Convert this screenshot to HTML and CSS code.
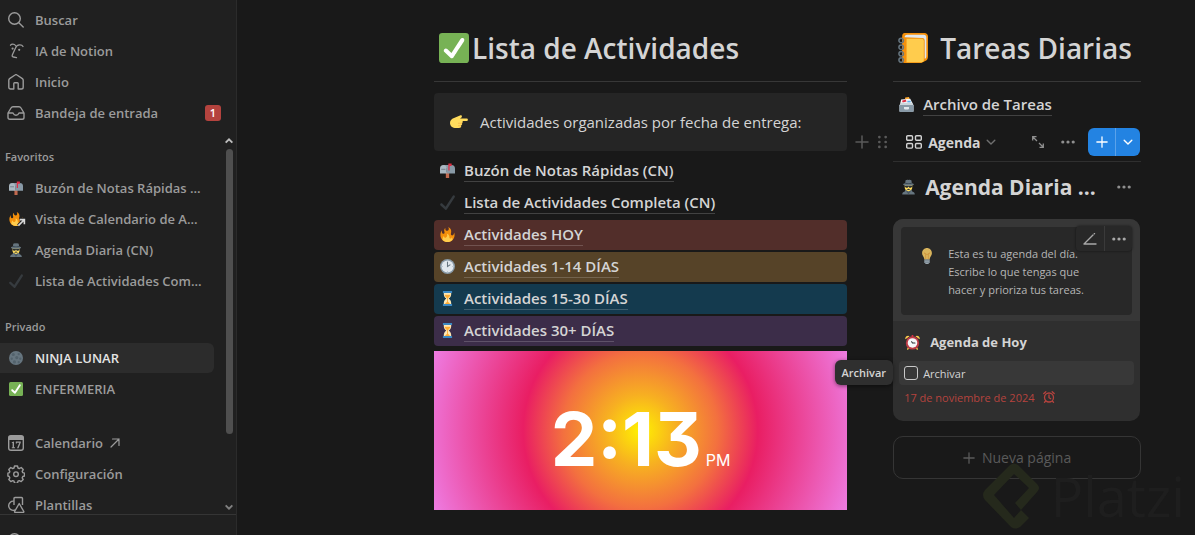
FILE: index.html
```html
<!DOCTYPE html>
<html lang="es">
<head>
<meta charset="utf-8">
<meta name="viewport" content="width=device-width, initial-scale=1">
<title>NINJA LUNAR</title>
<link rel="stylesheet" href="styles.css">
</head>
<body>
<svg class="sprite" aria-hidden="true">
  <symbol id="e-check" viewBox="0 0 36 36"><rect width="36" height="36" rx="4" fill="#77b255"/><path fill="#fff" d="M29.28 6.362c-1.156-.751-2.704-.422-3.458.736L14.936 23.877l-5.029-4.65c-1.014-.938-2.596-.875-3.533.138-.937 1.014-.875 2.596.139 3.533l7.209 6.666c.48.445 1.09.665 1.696.665.673 0 1.534-.282 2.099-1.139.332-.506 12.5-19.27 12.5-19.27.751-1.159.421-2.707-.737-3.458z"/></symbol>
  <symbol id="e-tick" viewBox="0 0 36 36"><path fill="#363b3f" d="M34.459 1.375c-1.391-.902-3.248-.506-4.149.884L13.5 28.17l-8.198-7.58c-1.217-1.125-3.114-1.051-4.239.166-1.125 1.216-1.051 3.114.166 4.239l10.764 9.952s.309.266.452.359c.504.328 1.07.484 1.63.484.982 0 1.945-.482 2.52-1.368L35.343 5.524c.902-1.39.506-3.248-.884-4.149z"/></symbol>
  <symbol id="e-mailbox" viewBox="0 0 36 36"><path fill="#c1694f" d="M14 22h8v14h-8z"/><path fill="#8899a6" d="M8 5h20c5 0 8 3 8 8v12H16V13z"/><path fill="#aab8c2" d="M8 5c5 0 8 3.500 8 8v12H0V13c0-5 3-8 8-8z"/><path fill="#66757f" d="M3 14h10v2H3z"/><path fill="#dd2e44" d="M20 1h8v6h-5v11h-3z"/></symbol>
  <symbol id="e-fire" viewBox="0 0 36 36"><path fill="#f4900c" d="M35 19c0-2.062-.367-4.039-1.040-5.868-.46 5.389-3.333 8.157-6.335 6.868-2.812-1.208-.917-5.917-.777-8.164.236-3.809-.012-8.169-6.931-11.794 2.875 5.500.333 8.917-2.333 9.125-2.958.231-5.667-2.542-4.667-7.042-3.238 2.386-3.332 6.402-2.333 9 1.042 2.708-.042 4.958-2.583 5.208-2.840.280-4.418-3.041-2.963-8.333C2.520 10.965 1 14.805 1 19c0 9.389 7.611 17 17 17s17-7.611 17-17z"/><path fill="#ffcc4d" d="M28.394 23.999c.148 3.084-2.561 4.293-4.019 3.709-2.106-.843-1.541-2.291-2.083-5.291s-2.625-5.083-5.708-6c2.250 6.333-1.247 8.667-3.080 9.084-1.872.426-3.753-.001-3.968-4.007C7.352 23.668 6 26.676 6 30c0 .368.023.730.055 1.090C9.125 34.124 13.342 36 18 36s8.875-1.876 11.945-4.910c.032-.36.055-.722.055-1.090 0-2.187-.584-4.236-1.606-6.001z"/></symbol>
  <symbol id="e-spy" viewBox="0 0 36 36"><path fill="#66757f" d="M3 36c0-4 2-6 6-7l2-5h14l2 5c4 1 6 3 6 7z"/><path fill="#ffdc5d" d="M9 13h18v7c0 4-4 8-9 8s-9-4-9-8z"/><path fill="#292f33" d="M9 15h18v2l-3 3h-4l-2-3-2 3h-4l-3-3zM13 24l5-2 5 2-5 1z"/><path fill="#66757f" d="M11 2c2-2 5-2 7-1 2-1 5-1 7 1l1 7c3 1 5 2 5 3 0 2-6 3-13 3S5 14 5 12c0-1 2-2 5-3z"/><path fill="#3b4a54" d="M10 8c5 1 11 1 16 0v2c-5 1-11 1-16 0z"/><path fill="#4a5963" d="M12 27l6 9 6-9-2 0-4 3-4-3z"/></symbol>
  <symbol id="e-moon" viewBox="0 0 36 36"><circle cx="18" cy="18" r="18" fill="#66757f"/><g fill="#53626c"><circle cx="11" cy="9" r="4"/><circle cx="25" cy="8" r="3"/><circle cx="20" cy="17" r="4"/><circle cx="7" cy="20" r="3"/><circle cx="29" cy="20" r="3"/><circle cx="14" cy="28" r="4"/><circle cx="25" cy="29" r="3"/></g></symbol>
  <symbol id="e-point" viewBox="0 0 36 36"><path fill="#ffdc5d" d="M33.500 11H20l3-2c2-3 0-5-3-4L8 10c-5 2-8 5-8 10 0 6 5 10 12 10h6c4 0 5-3 4-5 2-1 3-3 2-5 2-1 2-2 1-4h8.500c3 0 3-5 0-5z"/><path fill="none" stroke="#ef9645" stroke-width="1" d="M24 20.500h-8M22 25.500h-6"/></symbol>
  <symbol id="e-clock" viewBox="0 0 36 36"><circle cx="18" cy="18" r="18" fill="#8899a6"/><circle cx="18" cy="18" r="14.500" fill="#e1e8ed"/><path fill="none" stroke="#66757f" stroke-width="2.500" stroke-linecap="round" d="M18 7v11l6-4"/><path stroke="#99aab5" stroke-width="1.500" d="M18 29v2M5 18h2M29 18h2"/></symbol>
  <symbol id="e-hourglass" viewBox="0 0 36 36"><path fill="#ffe8b6" d="M9 4h18c0 7-1 10-6 14 5 4 6 7 6 14H9c0-7 1-10 6-14C10 14 9 11 9 4z"/><path fill="#ffac33" d="M11 9h14c-1 4-3 6-6 8v9l6 6H11l6-6v-9c-3-2-5-4-6-8z"/><path fill="#3b88c3" d="M7 0h22v5H7zM7 31h22v5H7z"/></symbol>
  <symbol id="e-notebook" viewBox="0 0 36 36"><path fill="#f4900c" d="M8 0h24c2 0 4 2 4 4v24c0 3-1 5-4 6l-4 2H8c-2 0-3-1-3-3V4c0-2 1-4 3-4z"/><path fill="#e1e8ed" d="M8 5c0-2 1-3 3-3h20c2 0 3 1 3 3v23c0 2-1 3-2 3V9c0-2-1-3-3-3z"/><path fill="#ffcc4d" d="M10 7h18c2 0 3 1 3 3v22c0 2-1 3-3 3H10z"/><path fill="#f4900c" d="M5 5l5 2v28H8c-2 0-3-1-3-3z"/><g fill="none" stroke="#66757f" stroke-width="1.800"><circle cx="3.800" cy="9" r="2.700"/><circle cx="3.800" cy="17" r="2.700"/><circle cx="3.800" cy="25" r="2.700"/><circle cx="3.800" cy="32.500" r="2.700"/></g></symbol>
  <symbol id="e-box" viewBox="0 0 36 36"><path fill="#ffac33" d="M15 1l9-1 3 10H13z"/><path fill="#f5f8fa" d="M5 6l22-2 6 12H3z"/><path fill="#dd2e44" d="M7 9l9-3 2 5-9 2z"/><path fill="#5dadec" d="M20 9h8v4h-8z"/><path fill="#ccd6dd" d="M4 14h28l3 6v13c0 2-1 3-3 3H4c-2 0-3-1-3-3V20z"/><path fill="#8899a6" d="M1 19h34v14c0 2-1 3-3 3H4c-2 0-3-1-3-3z"/><path fill="#e1e8ed" d="M12 24h12v4c-2 3-10 3-12 0z"/></symbol>
  <symbol id="e-bulb" viewBox="0 0 36 36"><path fill="#d9b45c" d="M29 11c0 7-5 9-5 15H12c0-6-5-8-5-15C7 5 12 0 18 0s11 5 11 11z"/><path fill="none" stroke="#c98a35" stroke-width="1.500" d="M15 25V15l-3-4 3 2 3 2 3-2 3-2-3 4v10"/><path fill="#9aa7b0" d="M12 26h12v6l-3 4h-6l-3-4z"/><path fill="#66757f" d="M12 28h12v1.500H12zM12 31h12v1.500H12z"/></symbol>
  <symbol id="e-alarm" viewBox="0 0 36 36"><path fill="#ffcc4d" d="M1 10c-2-5 5-11 10-7zM35 10c2-5-5-11-10-7zM6 30l4 2-3 4-2-1zM30 30l-4 2 3 4 2-1z"/><path fill="#dd2e44" d="M16 0h4v5h-4z"/><circle cx="18" cy="19" r="16" fill="#be3c47"/><circle cx="18" cy="19" r="11.500" fill="#f5f8fa"/><path fill="none" stroke="#292f33" stroke-width="2.500" stroke-linecap="round" d="M18 19h6M18 19l-2-3"/></symbol>

  <symbol id="i-search" viewBox="0 0 16 16"><g fill="none" stroke="currentColor" stroke-width="1.400" stroke-linecap="round"><circle cx="6.500" cy="6.500" r="5.800"/><path d="M10.800 10.800l4.400 4.200"/></g></symbol>
  <symbol id="i-ai" viewBox="0 0 16 16"><g fill="none" stroke="currentColor" stroke-width="1.300" stroke-linecap="round" stroke-linejoin="round"><path d="M2.500 2.200C3.500.8 6.200.6 7.500 2.500M15 3.500C14 1.500 9 .8 7.500 5L4.500 11.500c-.6 1.500-.5 2.500 1 2.500l3 .6"/></g><circle cx="4.600" cy="5.600" r="1.100" fill="currentColor"/><circle cx="11.200" cy="6.800" r="1.100" fill="currentColor"/></symbol>
  <symbol id="i-home" viewBox="0 0 16 16"><path fill="none" stroke="currentColor" stroke-width="1.400" stroke-linejoin="round" d="M.8 6.200Q.8 5.200 1.600 4.600L7 1q1-.7 2 0l5.400 3.600q.8.600.8 1.600v7q0 1.800-1.800 1.800H10.200V9.600q0-.8-.8-.8H6.600q-.8 0-.8.800V15H2.600Q.8 15 .8 13.200z"/></symbol>
  <symbol id="i-inbox" viewBox="0 0 18 16"><path fill="none" stroke="currentColor" stroke-width="1.400" stroke-linejoin="round" d="M1 8l3-5q.7-1.200 2-1.200h6q1.300 0 2 1.200l3 5v4.400q0 1.800-1.800 1.800H2.800Q1 14.200 1 12.400zM1 8h4.500q.7 0 .9.600.5 1.600 2.600 1.600t2.600-1.600q.2-.6.900-.6H17"/></symbol>
  <symbol id="i-cal" viewBox="0 0 16 16"><path fill="none" stroke="currentColor" stroke-width="1.400" d="M.7 3.500V13q0 2.300 2.300 2.300h10q2.300 0 2.300-2.300V3.500z"/><path fill="currentColor" d="M0 5V2.800Q0 0 2.800 0h10.400Q16 0 16 2.800V5zM3.800 7.200L6 6.400v5.800h1v1H3.800v-1h.8V7.900h-.8zM7.800 6.400h5v1.200l-2.300 5.600H9l2.300-5.400H8.900v.8H7.800z"/></symbol>
  <symbol id="i-gear" viewBox="0 0 18 18"><g fill="none" stroke="currentColor" stroke-width="1.400" stroke-linejoin="round"><path d="M7.500 1h3l.5 2 1.300.6 1.900-1.100 2 2.100-1 1.800.6 1.300 1.700.5v2.800l-1.700.5-.6 1.300 1 1.800-2 2-1.900-1-1.300.6-.5 2h-3L7 16.200l-1.300-.6-1.900 1-2-2 1-1.800-.6-1.300L.9 11V8.200l1.500-.5.400-1.300-1-1.800 2-2.100 1.900 1.100L7 3z"/><circle cx="9" cy="9.200" r="2.300"/></g></symbol>
  <symbol id="i-shapes" viewBox="0 0 18 18"><g fill="none" stroke="currentColor" stroke-width="1.400" stroke-linejoin="round"><path d="M7 5.200A4.600 4.600 0 1 0 8 14M7 9V2.500Q7 1.500 8 1.500h6.500q1 0 1 1V9M12.200 7.500l4.600 8q.2.900-.6.900H8.200q-.8 0-.6-.9z"/></g></symbol>
  <symbol id="i-chev" viewBox="0 0 10 10"><path fill="none" stroke="currentColor" stroke-width="1.400" stroke-linecap="round" stroke-linejoin="round" d="M1.200 3.200L5 7l3.800-3.800"/></symbol>
  <symbol id="i-arrow" viewBox="0 0 10 10"><path fill="none" stroke="currentColor" stroke-width="2.400" d="M.8 3L5 7.200 9.200 3"/></symbol>
  <symbol id="i-plus" viewBox="0 0 14 14"><path fill="none" stroke="currentColor" stroke-width="1.500" stroke-linecap="round" d="M7 1v12M1 7h12"/></symbol>
  <symbol id="i-dots" viewBox="0 0 14 14"><g fill="currentColor"><circle cx="1.800" cy="7" r="1.600"/><circle cx="7" cy="7" r="1.600"/><circle cx="12.200" cy="7" r="1.600"/></g></symbol>
  <symbol id="i-ne" viewBox="0 0 10 10"><path fill="none" stroke="currentColor" stroke-width="1.200" stroke-linecap="round" d="M1 9l8-8M2.500 1H9v6.500"/></symbol>
</svg>

<div class="app">
  <aside class="sidebar">
    <nav class="nav-top" aria-label="Principal">
      <a class="item" href="#"><svg class="ico"><use href="#i-search"/></svg><span class="label">Buscar</span></a>
      <a class="item" href="#"><svg class="ico"><use href="#i-ai"/></svg><span class="label">IA de Notion</span></a>
      <a class="item" href="#"><svg class="ico"><use href="#i-home"/></svg><span class="label">Inicio</span></a>
      <a class="item" href="#"><svg class="ico wide"><use href="#i-inbox"/></svg><span class="label">Bandeja de entrada</span><span class="badge">1</span></a>
    </nav>
    <div class="scroll">
      <div class="lists">
        <h2 class="group">Favoritos</h2>
        <nav class="section" aria-label="Favoritos">
          <a class="item" href="#"><svg class="ico emo"><use href="#e-mailbox"/></svg><span class="label">Buzón de Notas Rápidas ...</span></a>
          <a class="item" href="#"><span class="fire"><svg class="ico emo"><use href="#e-fire"/></svg><svg class="link-arrow" viewBox="0 0 10 10"><path d="M1.500 8.500l6-6M3 1.800h5.200V7" fill="none" stroke="#202020" stroke-width="4"/><path d="M1.500 8.500l6-6M3 1.800h5.200V7" fill="none" stroke="#d8d8d8" stroke-width="1.800"/></svg></span><span class="label">Vista de Calendario de A...</span></a>
          <a class="item" href="#"><svg class="ico emo"><use href="#e-spy"/></svg><span class="label">Agenda Diaria (CN)</span></a>
          <a class="item" href="#"><svg class="ico emo"><use href="#e-tick"/></svg><span class="label">Lista de Actividades Com...</span></a>
        </nav>
        <h2 class="group">Privado</h2>
        <nav class="section" aria-label="Privado">
          <a class="item active" href="#" aria-current="page"><svg class="ico emo"><use href="#e-moon"/></svg><span class="label">NINJA LUNAR</span></a>
          <a class="item" href="#"><svg class="ico emo"><use href="#e-check"/></svg><span class="label">ENFERMERIA</span></a>
        </nav>
        <nav class="section tools" aria-label="Herramientas">
          <a class="item" href="#"><svg class="ico"><use href="#i-cal"/></svg><span class="label">Calendario</span><svg class="ext"><use href="#i-ne"/></svg></a>
          <a class="item" href="#"><svg class="ico wide"><use href="#i-gear"/></svg><span class="label">Configuración</span></a>
          <a class="item" href="#"><svg class="ico wide"><use href="#i-shapes"/></svg><span class="label">Plantillas</span></a>
        </nav>
      </div>
      <div class="bar" aria-hidden="true">
        <svg class="bar-up"><use href="#i-arrow"/></svg>
        <div class="thumb"></div>
        <svg class="bar-down"><use href="#i-arrow"/></svg>
      </div>
    </div>
    <div class="foot"><svg class="ico"><use href="#i-search"/></svg></div>
  </aside>

  <main class="page">
    <section class="col-main">
      <h1 class="title"><svg class="big"><use href="#e-check"/></svg><span>Lista de Actividades</span></h1>
      <div class="callout"><svg class="hand"><use href="#e-point"/></svg><p>Actividades organizadas por fecha de entrega:</p></div>
      <div class="rows">
        <div class="row"><svg class="emo"><use href="#e-mailbox"/></svg><a href="#">Buzón de Notas Rápidas (CN)</a></div>
        <div class="row"><svg class="emo"><use href="#e-tick"/></svg><a href="#">Lista de Actividades Completa (CN)</a></div>
        <div class="row red"><svg class="emo"><use href="#e-fire"/></svg><a href="#">Actividades HOY</a></div>
        <div class="row brown"><svg class="emo"><use href="#e-clock"/></svg><a href="#">Actividades 1-14 DÍAS</a></div>
        <div class="row blue"><svg class="emo"><use href="#e-hourglass"/></svg><a href="#">Actividades 15-30 DÍAS</a></div>
        <div class="row purple"><svg class="emo"><use href="#e-hourglass"/></svg><a href="#">Actividades 30+ DÍAS</a></div>
      </div>
      <div class="clock"><span class="time">2:13</span><span class="ampm">PM</span></div>
    </section>

    <section class="col-side">
      <h1 class="title side-title"><svg class="big"><use href="#e-notebook"/></svg><span>Tareas Diarias</span></h1>
      <div class="archive"><svg class="emo"><use href="#e-box"/></svg><a href="#">Archivo de Tareas</a></div>
      <div class="toolbar">
        <div class="handles">
          <button type="button" aria-label="Añadir bloque"><svg class="h-plus"><use href="#i-plus"/></svg></button>
          <button type="button" aria-label="Mover bloque"><svg class="h-grip" viewBox="0 0 10 14"><g fill="currentColor"><circle cx="1.500" cy="1.500" r="1.500"/><circle cx="8.500" cy="1.500" r="1.500"/><circle cx="1.500" cy="7" r="1.500"/><circle cx="8.500" cy="7" r="1.500"/><circle cx="1.500" cy="12.500" r="1.500"/><circle cx="8.500" cy="12.500" r="1.500"/></g></svg></button>
        </div>
        <button type="button" class="view"><svg class="grid-ico" viewBox="0 0 16 14"><g fill="none" stroke="currentColor" stroke-width="1.400"><rect x=".7" y=".7" width="5.800" height="4.600" rx="1"/><rect x="9.500" y=".7" width="5.800" height="4.600" rx="1"/><rect x=".7" y="8.500" width="5.800" height="4.600" rx="1"/><rect x="9.500" y="8.500" width="5.800" height="4.600" rx="1"/></g></svg><span>Agenda</span><svg class="chev"><use href="#i-chev"/></svg></button>
        <button type="button" class="tool" aria-label="Abrir como página"><svg class="expand" viewBox="0 0 12 12"><path fill="none" stroke="currentColor" stroke-width="1.300" d="M.7 4.500V.7h3.800M.7.7l4.300 4.300M11.300 7.500v3.800H7.500M11.300 11.300L7 7"/></svg></button>
        <button type="button" class="tool" aria-label="Más opciones"><svg class="dots"><use href="#i-dots"/></svg></button>
        <div class="new">
          <button type="button" class="new-add" aria-label="Nuevo"><svg><use href="#i-plus"/></svg></button>
          <button type="button" class="new-more" aria-label="Más plantillas"><svg><use href="#i-chev"/></svg></button>
        </div>
      </div>
      <div class="db-title"><svg class="emo"><use href="#e-spy"/></svg><h2>Agenda Diaria ...</h2><button type="button" class="tool" aria-label="Opciones de la base"><svg class="dots"><use href="#i-dots"/></svg></button></div>

      <article class="card">
        <div class="preview">
          <div class="note"><svg class="bulb"><use href="#e-bulb"/></svg><p>Esta es tu agenda del día.<br>Escribe lo que tengas que<br>hacer y prioriza tus tareas.</p></div>
          <div class="actions">
            <button type="button" aria-label="Editar"><svg class="pen" viewBox="0 0 14 12"><path fill="none" stroke="currentColor" stroke-width="1.400" stroke-linecap="round" d="M1 11L10 2M11.300.8l.2-.2M1 11h12"/></svg></button>
            <button type="button" aria-label="Más"><svg class="dots"><use href="#i-dots"/></svg></button>
          </div>
        </div>
        <div class="details">
          <h3><svg class="emo"><use href="#e-alarm"/></svg><span>Agenda de Hoy</span></h3>
          <label class="prop"><input type="checkbox"><span>Archivar</span></label>
          <p class="date"><span>17 de noviembre de 2024</span><svg class="bell" viewBox="0 0 12 12"><g fill="none" stroke="currentColor" stroke-width="1.300" stroke-linecap="round"><circle cx="6" cy="6.500" r="4.500"/><path d="M6 4v2.700l1.700 1M.8 2.600L2.800.8M11.200 2.600L9.200.8M2.500 10.300l-1 1M9.500 10.300l1 1"/></g></svg></p>
          <div class="tip" role="tooltip">Archivar</div>
        </div>
      </article>
      <button type="button" class="add-page"><svg><use href="#i-plus"/></svg><span>Nueva página</span></button>
    </section>
  </main>

  <div class="mark" aria-hidden="true">
    <svg viewBox="0 0 56 66"><path fill="#25291c" fill-rule="evenodd" d="M2 27L27 2q4-3 8 0l19 19q4 4 0 8L38 47l8 8-9 9q-5 3-9 0L2 37q-4-5 0-10zM11 32l20 23 7-8-6-7 14-15L31 11z"/></svg>
    <span>Platzi</span>
  </div>
</div>
</body>
</html>
```
FILE: styles.css
```css
* { box-sizing: border-box; }
body { margin: 0; background: #191919; color: #d4d4d4; font-family: "Open Sans", "Noto Sans", sans-serif; }
h1, h2, h3, p { margin: 0; }
a { color: inherit; text-decoration: none; }
button { margin: 0; padding: 0; border: 0; background: none; color: inherit; font: inherit; display: flex; align-items: center; justify-content: center; }
svg { display: block; flex: none; }
.sprite { position: absolute; width: 0; height: 0; }
.app { position: relative; display: flex; height: 100vh; overflow: hidden; }
.emo { width: 14px; height: 14px; }

.sidebar { display: flex; flex-direction: column; flex: none; width: 237px; background: #202020; border-right: 1px solid #2b2b2b; color: #9b9b9b; }
.nav-top { display: flex; flex-direction: column; gap: 1px; padding: 5px 13px 0 0; }
.section { display: flex; flex-direction: column; gap: 1px; }
.item { display: flex; align-items: center; height: 30px; padding: 0 2px 0 8px; font-size: 13px; font-weight: 600; white-space: nowrap; border-radius: 0 6px 6px 0; }
.item .label { margin-left: 11px; }
.ico { width: 16px; height: 16px; }
.ico.wide { width: 18px; height: 18px; margin: 0 -1px; }
.ico.emo { width: 14px; height: 14px; margin: 0 1px; }
.badge { margin-left: auto; width: 16px; height: 16px; border-radius: 3px; background: #b4433e; color: #fff; font-size: 11px; line-height: 16px; text-align: center; }
.scroll { display: flex; flex: 1; min-height: 0; overflow: hidden; margin-top: 8px; }
.lists { flex: 1; min-width: 0; padding: 9px 11px 0 0; }
.group { height: 28px; padding-left: 5px; font-size: 11px; font-weight: 600; line-height: 24px; }
.section + .group { margin-top: 19px; }
.tools { margin-top: 24px; }
.active { background: #2c2c2c; color: #e4e4e4; }
.fire { position: relative; }
.link-arrow { position: absolute; right: -2px; bottom: -1px; width: 9px; height: 9px; overflow: visible; }
.ext { width: 10px; height: 10px; margin-left: 7px; }
.bar { display: flex; flex-direction: column; align-items: center; flex: none; width: 8px; margin-right: 3px; color: #bdbdbd; }
.bar svg { width: 8px; height: 8px; }
.bar-up { transform: rotate(180deg); margin-top: 1px; }
.thumb { flex: 1; width: 7px; margin: 4px 0 69px; border-radius: 4px; background: #4f4f4f; }
.bar .bar-down { margin-bottom: 3px; color: #808080; }
.foot { flex: none; height: 21px; padding: 18px 8px 0; border-top: 1px solid #353535; overflow: hidden; }

.page { display: grid; grid-template-columns: 5fr 3fr; gap: 46px; flex: 1; min-width: 0; align-items: start; padding: 16px 54px 0 197px; }
.col-main, .col-side { min-width: 0; }
.title { display: flex; align-items: center; gap: 3px; height: 66px; padding: 0 0 2px 5px; border-bottom: 1px solid #373737; font-size: 28px; font-weight: 600; white-space: nowrap; }
.big { width: 30px; height: 30px; }
.side-title { gap: 12px; }
.callout { display: flex; align-items: center; gap: 12px; min-height: 58px; margin-top: 11px; padding: 0 16px; border-radius: 4px; background: #252525; font-size: 15px; white-space: nowrap; }
.hand { width: 18px; height: 18px; }
.rows { display: flex; flex-direction: column; gap: 2px; margin: 5px 0; }
.row { display: flex; align-items: center; gap: 9px; height: 30px; padding: 0 6px 2px; border-radius: 4px; font-size: 15px; font-weight: 600; }
.row a, .archive a { line-height: 22px; border-bottom: 1px solid rgba(255, 255, 255, .18); white-space: nowrap; }
.row .emo, .archive .emo { width: 15px; height: 15px; }
.red { background: #522e2a; }
.brown { background: #564328; }
.blue { background: #143a4e; }
.purple { background: #3c2d49; }
.clock { display: flex; align-items: baseline; justify-content: center; gap: 4px; height: 159px; color: #fff; font-family: Inter, "Liberation Sans", sans-serif; background: radial-gradient(circle, #fff200 0%, #f7b021 16%, #f3703f 35%, #e91e63 53%, #ee7ce2 100%); }
.time { font-size: 74px; font-weight: 700; line-height: 176px; font-feature-settings: "cv09"; }
.ampm { font-size: 16px; }

.archive { display: flex; align-items: center; gap: 9px; height: 28px; margin-top: 8px; padding-left: 6px; font-size: 15px; font-weight: 600; }
.toolbar { position: relative; display: flex; align-items: center; height: 44px; padding: 5px 1px 0 13px; border-bottom: 1px solid #2f2f2f; }
.handles { position: absolute; right: 100%; top: 16px; display: flex; align-items: center; gap: 9px; height: 16px; margin-right: 6px; color: #5a5a5a; }
.h-plus { width: 14px; height: 14px; }
.h-grip { width: 9px; height: 14px; }
.view { gap: 6px; margin-right: auto; font-size: 14px; font-weight: 700; }
.grid-ico { width: 16px; height: 14px; }
.chev { width: 10px; height: 10px; color: #6f6f6f; }
.tool { color: #8f8f8f; }
.expand { width: 12px; height: 12px; margin-right: 17px; }
.dots { width: 14px; height: 14px; }
.new { display: flex; height: 28px; margin-left: 13px; border-radius: 6px; background: #2383e2; color: #fff; overflow: hidden; }
.new-add { width: 28px; border-right: 1px solid #5ba2ea; }
.new-more { width: 24px; }
.new-add svg { width: 12px; height: 12px; }
.new-more svg { width: 10px; height: 10px; }
.db-title { display: flex; align-items: center; height: 50px; padding: 0 10px 0 8px; }
.db-title .emo { width: 15px; height: 16px; }
.db-title h2 { flex: 1; margin-left: 9px; font-size: 21px; font-weight: 700; white-space: nowrap; }

.card { margin: 7px 1px 0 0; border-radius: 10px; background: #2f2f2f; }
.preview { position: relative; padding: 8px 8px 6px; border-radius: 10px 10px 0 0; background: #373737; }
.note { display: flex; gap: 13px; padding: 18px 0 16px 18px; border-radius: 4px; background: #282828; color: #b6b6b6; font-size: 11px; font-weight: 500; line-height: 18px; white-space: nowrap; }
.bulb { width: 16px; height: 16px; margin-top: 3px; }
.actions { position: absolute; top: 7px; right: 8px; display: flex; height: 25px; border-radius: 4px; background: #282828; box-shadow: 0 0 2px 1px rgba(0, 0, 0, .25); color: #a8a8a8; }
.actions button { width: 28px; }
.actions button + button { border-left: 1px solid #3a3a3a; }
.pen { width: 14px; height: 12px; }
.details { position: relative; padding: 8px 6px 14px; }
.details h3 { display: flex; align-items: center; gap: 10px; height: 26px; padding-left: 6px; font-size: 13px; font-weight: 700; }
.details h3 .emo { width: 15px; height: 15px; }
.prop { display: flex; align-items: center; gap: 5px; height: 24px; margin-top: 6px; padding-left: 5px; border-radius: 4px; background: #383838; font-size: 11px; font-weight: 500; }
.prop input { appearance: none; width: 14px; height: 14px; margin: 0; border: 1px solid #c8c8c8; border-radius: 3px; }
.date { display: flex; align-items: center; gap: 8px; height: 22px; padding: 2px 0 0 5px; color: #b5433e; font-size: 11px; font-weight: 500; }
.bell { width: 12px; height: 12px; }
.tip { position: absolute; right: 100%; top: 39px; height: 25px; padding: 0 7px; border-radius: 6px; background: #2f2f2f; box-shadow: 0 1px 4px rgba(0, 0, 0, .5); font-size: 11px; font-weight: 600; line-height: 25px; }
.add-page { gap: 7px; width: 100%; height: 43px; margin-top: 15px; border: 1px solid #353535; border-radius: 10px; color: #5a5a5a; font-size: 14px; }
.add-page svg { width: 12px; height: 12px; }

.mark { position: absolute; right: 10px; bottom: 6px; display: flex; align-items: center; gap: 12px; pointer-events: none; }
.mark svg { width: 56px; height: 66px; }
.mark span { color: #1e1e1e; font-family: "Open Sans", sans-serif; font-size: 54px; font-weight: 500; line-height: 60px; }
```
